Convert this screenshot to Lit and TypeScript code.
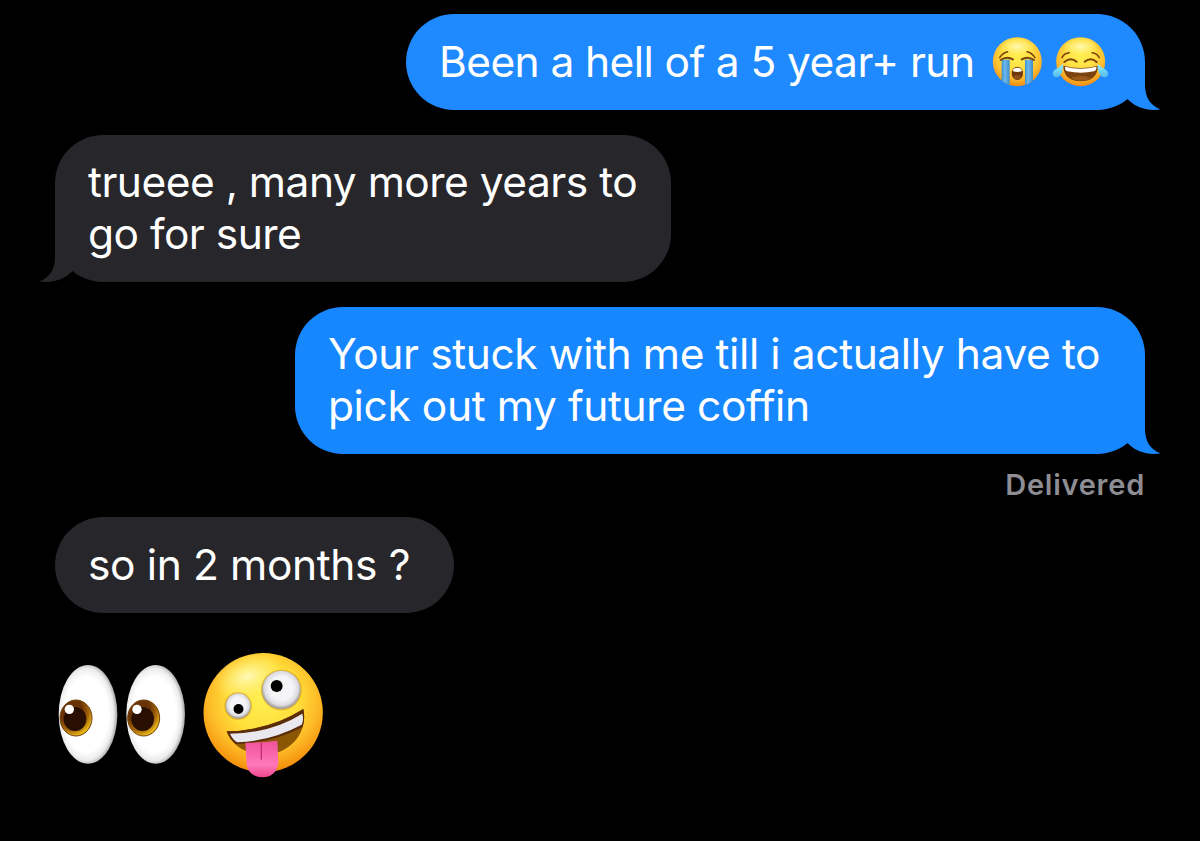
import { html, css, svg, LitElement, nothing } from 'lit';
import { customElement, property } from 'lit/decorators.js';

type EmojiName = 'sob' | 'joy' | 'eyes' | 'zany';

interface Message {
    id: string;
    from: 'me' | 'them';
    lines: string[];
    emojis?: EmojiName[];
    tail?: boolean;
}

const messages: Message[] = [
    { id: 'run', from: 'me', lines: ['Been a hell of a 5 year+ run'], emojis: ['sob', 'joy'], tail: true },
    { id: 'true', from: 'them', lines: ['trueee , many more years to', 'go for sure'], tail: true },
    { id: 'stuck', from: 'me', lines: ['Your stuck with me till i actually have to', 'pick out my future coffin'], tail: true },
    { id: 'months', from: 'them', lines: ['so in 2 months ?'] },
];

const faceGradient = svg`
    <radialGradient id="face" cx="0.5" cy="0.36" r="0.66">
        <stop offset="0" stop-color="#fff04f" />
        <stop offset="0.45" stop-color="#ffe045" />
        <stop offset="0.75" stop-color="#fdb92c" />
        <stop offset="1" stop-color="#ee8613" />
    </radialGradient>
    <radialGradient id="shine" cx="0.5" cy="0.5" r="0.5">
        <stop offset="0" stop-color="#fffbc0" stop-opacity="0.9" />
        <stop offset="1" stop-color="#fff58a" stop-opacity="0" />
    </radialGradient>
`;

const emojis = {
    sob: {
        box: '36 108 152 152',
        art: svg`
            <defs>
                ${faceGradient}
                <linearGradient id="stream" x1="0" x2="1" y1="0" y2="0">
                    <stop offset="0" stop-color="#3c8fd0" />
                    <stop offset="0.4" stop-color="#6db9ee" />
                    <stop offset="1" stop-color="#3d8ccb" />
                </linearGradient>
                <clipPath id="head"><circle cx="112" cy="185" r="73.5" /></clipPath>
            </defs>
            <circle cx="112" cy="185" r="73.5" fill="url(#face)" />
            <ellipse cx="112" cy="140" rx="52" ry="26" fill="url(#shine)" />
            <g clip-path="url(#head)">
                <rect x="65" y="179" width="24" height="80" fill="url(#stream)" />
                <rect x="135" y="179" width="24" height="80" fill="url(#stream)" />
            </g>
            <g fill="none" stroke="#7a4309" stroke-width="4.5" stroke-linecap="round">
                <path d="M59 173Q68 158 83 155" />
                <path d="M141 155Q156 158 165 173" />
                <path d="M62 180Q80 167 99 178" stroke-width="6" />
                <path d="M125 178Q144 167 162 180" stroke-width="6" />
            </g>
            <ellipse cx="112" cy="220" rx="17" ry="20" fill="#72390b" />
            <path d="M98 213Q100 203 112 203T126 213Q112 219 98 213Z" fill="#fff" />
            <ellipse cx="112" cy="232" rx="10" ry="6" fill="#8e531a" />
        `,
    },
    joy: {
        box: '216 108 170 156',
        art: svg`
            <defs>
                ${faceGradient}
                <linearGradient id="tear" x1="0" x2="0" y1="0" y2="1">
                    <stop offset="0" stop-color="#a5effb" />
                    <stop offset="0.5" stop-color="#6fd7f6" />
                    <stop offset="1" stop-color="#55b8ea" />
                </linearGradient>
            </defs>
            <circle cx="302" cy="185" r="73.5" fill="url(#face)" />
            <ellipse cx="302" cy="140" rx="52" ry="26" fill="url(#shine)" />
            <g fill="none" stroke="#7a4309" stroke-width="4.5" stroke-linecap="round">
                <path d="M246 173Q252 159 268 158" />
                <path d="M336 158Q351 159 358 173" />
                <path d="M253 186Q272 170 290 185" stroke-width="6" />
                <path d="M314 185Q333 170 350 186" stroke-width="6" />
            </g>
            <path d="M250 197Q302 211 354 197Q353 243 302 244Q251 243 250 197Z" fill="#7c430e" />
            <path d="M255 200Q302 212 349 200Q350 211 342 214Q302 222 262 214Q254 211 255 200Z" fill="#fff" />
            <path d="M272 234Q302 222 332 234Q321 242 302 242T272 234Z" fill="#98591a" />
            <path d="M249 191C251 214 242 231 230 232C218 232 215 219 223 211C231 204 241 201 249 191Z" fill="url(#tear)" />
            <path d="M353 191C351 214 360 231 374 232C386 231 387 219 379 211C371 204 361 201 353 191Z" fill="url(#tear)" />
        `,
    },
    eyes: {
        box: '52 70 388 302',
        art: svg`
            <defs>
                <radialGradient id="white" cx="0.47" cy="0.5" r="0.53">
                    <stop offset="0.72" stop-color="#fff" />
                    <stop offset="0.88" stop-color="#ececec" />
                    <stop offset="1" stop-color="#a4a4a4" />
                </radialGradient>
                <radialGradient id="iris" cx="0.34" cy="0.28" r="0.8">
                    <stop offset="0.45" stop-color="#693306" />
                    <stop offset="0.7" stop-color="#a56609" />
                    <stop offset="0.9" stop-color="#e5b417" />
                </radialGradient>
            </defs>
            ${[0, 203].map(x => svg`
                <g transform="translate(${x} 0)">
                    <ellipse cx="145" cy="221" rx="88" ry="148" fill="url(#white)" />
                    <ellipse cx="109" cy="232" rx="48" ry="54" fill="url(#iris)" stroke="#70400c" stroke-width="3" />
                    <ellipse cx="106" cy="235" rx="34" ry="36" fill="#290f02" />
                    <circle cx="89" cy="206" r="14" fill="#fff" />
                </g>
            `)}
        `,
    },
    zany: {
        box: '38 36 368 380',
        art: svg`
            <defs>
                <radialGradient id="zanyFace" cx="0.5" cy="0.38" r="0.64">
                    <stop offset="0" stop-color="#fff052" />
                    <stop offset="0.45" stop-color="#ffdf3a" />
                    <stop offset="0.72" stop-color="#fdbb27" />
                    <stop offset="0.93" stop-color="#f5940f" />
                    <stop offset="1" stop-color="#e87d0d" />
                </radialGradient>
                <radialGradient id="zanyShine">
                    <stop offset="0" stop-color="#fffbc4" stop-opacity="0.9" />
                    <stop offset="1" stop-color="#fff58a" stop-opacity="0" />
                </radialGradient>
                <radialGradient id="ball" cx="0.5" cy="0.46">
                    <stop offset="0.6" stop-color="#f5f4f7" />
                    <stop offset="0.88" stop-color="#dcdbe0" />
                    <stop offset="1" stop-color="#aaa5a0" />
                </radialGradient>
                <linearGradient id="tongue" x1="0" x2="0" y1="0" y2="1">
                    <stop offset="0" stop-color="#f0529b" />
                    <stop offset="0.65" stop-color="#ff78b8" />
                    <stop offset="1" stop-color="#f0468e" />
                </linearGradient>
            </defs>
            <circle cx="221.5" cy="218" r="179" fill="url(#zanyFace)" />
            <ellipse cx="175" cy="110" rx="105" ry="65" fill="url(#zanyShine)" transform="rotate(-18 175 110)" />
            <circle cx="146.5" cy="198" r="41" fill="#c98a12" opacity="0.55" />
            <circle cx="276" cy="150" r="61" fill="#c98a12" opacity="0.55" />
            <circle cx="146.5" cy="198" r="38" fill="url(#ball)" />
            <circle cx="276" cy="150" r="58" fill="url(#ball)" />
            <circle cx="147.5" cy="207" r="15" fill="#000" />
            <circle cx="262" cy="138" r="18" fill="#000" />
            <path d="M112 274Q239 272 342 207C353 263 325 310 275 334C213 361 133 335 112 274Z" fill="#8b5704" />
            <path d="M112 274Q239 272 342 207Q348 236 340 261Q250 309 140 312Q122 300 112 274Z" fill="#5a2c08" />
            <path d="M122 281Q244 280 339 221Q344 242 337 254Q246 303 144 307Q129 298 122 281Z" fill="#e9e8ee" />
            <path d="M168 308Q217 308 264 302L267 365C265 397 245 412 219 412C191 411 175 396 172 373Z" fill="url(#tongue)" />
            <path d="M216 309V357" stroke="#c92b72" stroke-width="4" stroke-linecap="round" />
        `,
    },
};

@customElement('chat-emoji')
export class ChatEmoji extends LitElement {
    static styles = css`
        :host {
            display: block;
            flex: none;
        }

        svg {
            display: block;
        }

        .sob {
            width: 50.67px;
            height: 50.67px;
        }

        .joy {
            width: 56.67px;
            height: 52px;
        }

        .eyes {
            width: 129.33px;
            height: 100.67px;
        }

        .zany {
            width: 122.67px;
            height: 126.67px;
        }
    `

    @property({ type: String }) name: EmojiName = 'sob';

    render() {
        const { box, art } = emojis[this.name];

        return html`<svg class=${this.name} viewBox=${box}>${art}</svg>`
    }
}

@customElement('chat-bubble')
export class ChatBubble extends LitElement {
    static styles = css`
        :host {
            display: block;
        }

        .bubble {
            position: relative;
            box-sizing: border-box;
            display: flex;
            align-items: center;
            min-height: 96px;
            padding: 21px 33px 22px;
            border-radius: 48px;
            background: var(--bubble-color);
            color: #fff;
            font-size: 42.5px;
            line-height: 52px;
            white-space: nowrap;
        }

        .line {
            display: block;
        }

        .emojis {
            display: flex;
            align-items: center;
            gap: 10px;
            margin-left: auto;
            padding-right: 3px;
        }

        .run {
            width: 739px;
            letter-spacing: -0.6px;
        }

        .true {
            width: 616px;
            letter-spacing: -0.52px;
        }

        .stuck {
            width: 850px;
            letter-spacing: -0.4px;
        }

        .months {
            width: 399px;
            letter-spacing: -0.38px;
        }

        .tail {
            position: absolute;
            right: -16px;
            bottom: 0;
            width: 48px;
            height: 60px;
            fill: var(--bubble-color);
        }

        .them .tail {
            right: auto;
            left: -16px;
            transform: scaleX(-1);
        }
    `

    @property({ attribute: false }) message!: Message;

    render() {
        const { id, from, lines, emojis, tail } = this.message;

        return html`
            <div class="bubble ${from} ${id}">
                <div>${lines.map(line => html`<span class="line">${line}</span>`)}</div>
                ${emojis ? html`
                    <div class="emojis">
                        ${emojis.map(name => html`<chat-emoji name=${name}></chat-emoji>`)}
                    </div>
                ` : nothing}
                ${tail ? html`
                    <svg class="tail" viewBox="0 0 48 60">
                        <path d="M0 12H32V35C32 47 37 55.5 47.5 59.3C35 61.5 23 57.5 15 49.5L0 40Z" />
                    </svg>
                ` : nothing}
            </div>
        `
    }
}

@customElement('app-root')
export class AppRoot extends LitElement {
    static styles = css`
        :host {
            box-sizing: border-box;
            display: flex;
            flex-direction: column;
            align-items: flex-start;
            height: 841px;
            padding: 14px 55px 0;
            overflow: hidden;
            background: #000;
            font-family: Inter, 'Liberation Sans', sans-serif;
        }

        chat-bubble {
            --bubble-color: #27262b;
            margin-bottom: 25px;
        }

        .me {
            --bubble-color: #1787ff;
            align-self: flex-end;
        }

        .run {
            --bubble-color: #1f8aff;
        }

        .stuck {
            margin-bottom: 0;
        }

        .status {
            align-self: flex-end;
            height: 63px;
            padding-top: 13px;
            box-sizing: border-box;
            color: #8d8d93;
            font-size: 29px;
            font-weight: 600;
            line-height: 36px;
            letter-spacing: 0.75px;
        }

        .reactions {
            display: flex;
            align-items: flex-start;
            gap: 15px;
            margin: 14px 0 0 2.33px;
        }

        .reactions [name='eyes'] {
            margin-top: 12px;
        }
    `

    render() {
        return html`
            ${messages.map(message => html`
                <chat-bubble class="${message.from} ${message.id}" .message=${message}></chat-bubble>
                ${message.id === 'stuck' ? html`<div class="status">Delivered</div>` : nothing}
            `)}
            <div class="reactions">
                <chat-emoji name="eyes"></chat-emoji>
                <chat-emoji name="zany"></chat-emoji>
            </div>
        `
    }
}

declare global {
    interface HTMLElementTagNameMap {
        'app-root': AppRoot;
        'chat-bubble': ChatBubble;
        'chat-emoji': ChatEmoji;
    }
}
